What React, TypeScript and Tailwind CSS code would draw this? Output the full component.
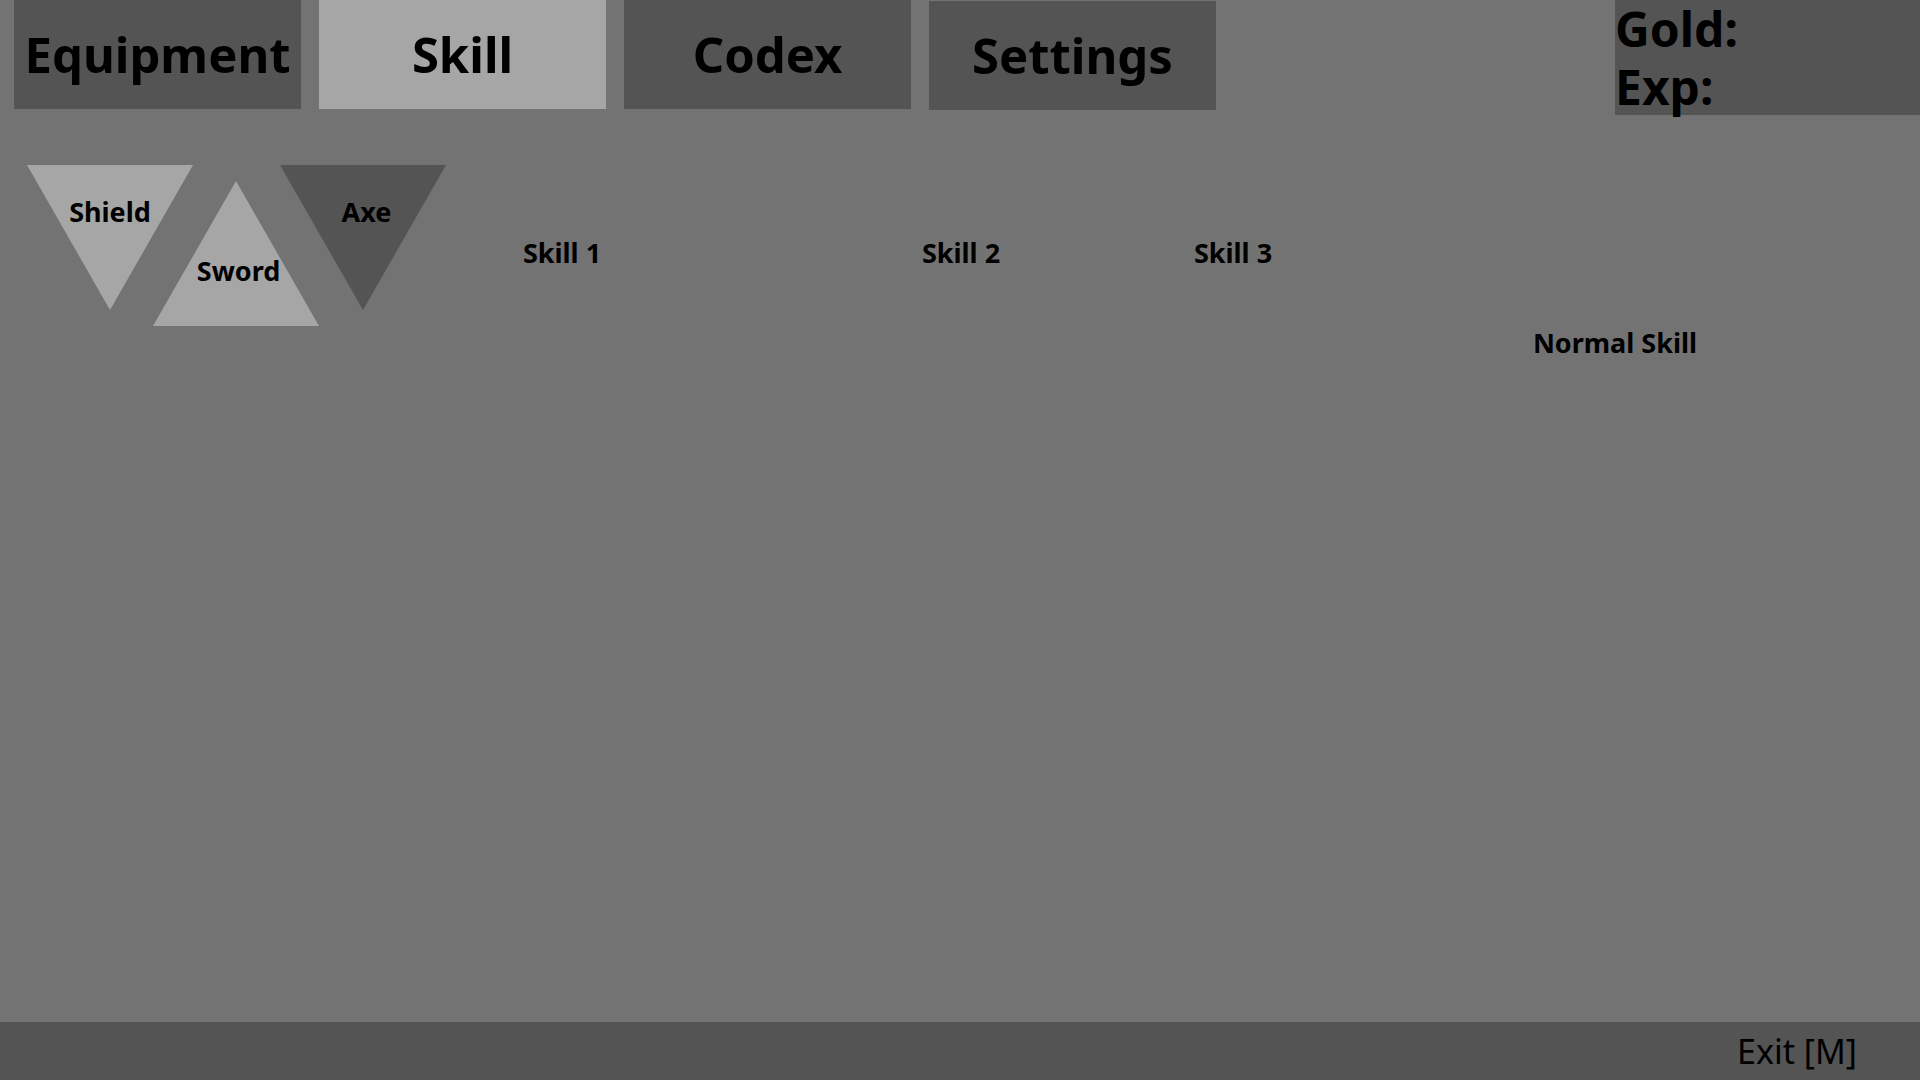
import React from 'react';

type TriProps = {
  label: string;
  fill: string;
  up?: boolean;
  labelClass: string;
  className?: string;
};

const Triangle: React.FC<TriProps> = ({ label, fill, up, labelClass, className }) => (
  <div className={`relative w-[166px] h-[145px] shrink-0 ${className ?? ''}`}>
    <svg width="166" height="145" viewBox="0 0 166 145" className="absolute inset-0">
      {up ? (
        <polygon points="83,0 166,145 0,145" fill={fill} />
      ) : (
        <polygon points="0,0 166,0 83,145" fill={fill} />
      )}
    </svg>
    <div className={`absolute left-0 right-0 text-center text-[27px] leading-[36px] font-bold ${labelClass}`}>
      {label}
    </div>
  </div>
);

const tabs = ['Equipment', 'Skill', 'Codex', 'Settings'];

const App: React.FC = () => {
  const active = 'Skill';

  return (
    <div className="w-[1920px] h-[1080px] bg-[#737373] flex flex-col text-black font-['Noto_Sans',sans-serif] overflow-hidden">
      {/* top bar */}
      <div className="flex justify-between items-start h-[115px]">
        <div className="flex gap-[18px] pl-[14px]">
          {tabs.map(t => (
            <div
              key={t}
              className={`w-[287px] h-[109px] flex items-center justify-center text-[49px] font-bold ${
                t === active ? 'bg-[#a6a6a6]' : 'bg-[#545454]'
              } ${t === 'Settings' ? 'mt-[1px]' : ''}`}
            >
              {t}
            </div>
          ))}
        </div>
        <div className="w-[305px] h-[115px] bg-[#545454] text-[48px] font-bold">
          <div className="h-[58px] leading-[58px]">Gold:</div>
          <div className="h-[57px] leading-[58px]">Exp:</div>
        </div>
      </div>

      {/* skill area */}
      <div className="flex-1 flex flex-col">
        <div className="flex items-start mt-[50px] pl-[27px]">
          <Triangle label="Shield" fill="#a6a6a6" labelClass="top-[29px]" />
          <Triangle label="Sword" fill="#a6a6a6" up labelClass="top-[72px] pl-[5px]" className="-ml-[40px] mt-[16px]" />
          <Triangle label="Axe" fill="#545454" labelClass="top-[29px] pl-[7px]" className="-ml-[39px]" />
          <div className="flex mt-[70px] text-[27px] leading-[36px] font-bold">
            <div className="w-[200px] text-center ml-[16px]">Skill 1</div>
            <div className="w-[200px] text-center ml-[199px]">Skill 2</div>
            <div className="w-[200px] text-center ml-[72px]">Skill 3</div>
          </div>
        </div>
        <div className="ml-[1515px] -mt-[1px] w-[200px] text-center text-[27px] leading-[36px] font-bold">
          Normal Skill
        </div>
      </div>

      {/* bottom bar */}
      <div className="h-[58px] bg-[#545454] flex items-center justify-end pr-[63px] text-[34px] leading-[46px] pb-[1px]">
        Exit [M]
      </div>
    </div>
  );
};

export default App;
